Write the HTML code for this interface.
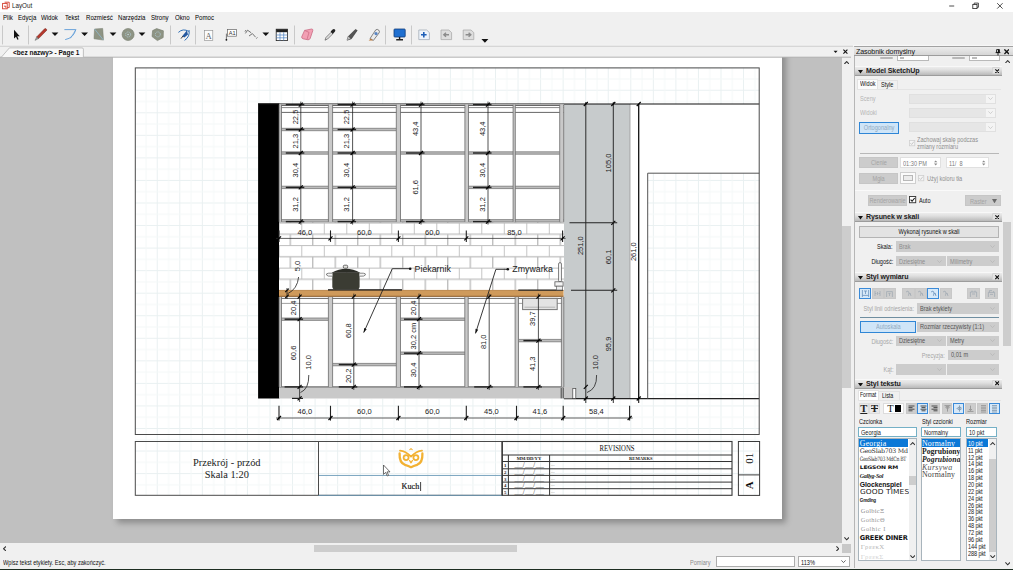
<!DOCTYPE html>
<html lang="pl">
<head>
<meta charset="utf-8">
<title>LayOut</title>
<style>
*{box-sizing:border-box;margin:0;padding:0}
html,body{width:1013px;height:570px;overflow:hidden;background:#f0f0f0}
body{position:relative;font-family:"Liberation Sans",sans-serif;font-size:7px;color:#000;line-height:1}
.a{position:absolute}
.t{position:absolute;white-space:nowrap;line-height:1}
#titlebar{left:0;top:0;width:1013px;height:12px;background:#fff}
#menubar{left:0;top:12px;width:1013px;height:12px;background:#f0f0f0}
#toolbar{left:0;top:24px;width:1013px;height:22px;background:#f0f0f0}
#tabrow{left:0;top:46px;width:851px;height:11px;background:#f0f0f0}
#canvas{left:0;top:57px;width:842px;height:486px;background:#c0c0c0;overflow:hidden}
#paper{left:112.5px;top:-10px;width:669.7px;height:471.5px;background:#fff;box-shadow:4px 4px 6px 0 rgba(0,0,0,.27)}
#vscroll{left:842px;top:57px;width:9px;height:486px;background:#f0f0f0}
#hscroll{left:0;top:543px;width:842px;height:10px;background:#f0f0f0}
#status{left:0;top:553px;width:853px;height:15px;background:#f0f0f0}
#bottomedge{left:0;top:568.7px;width:1013px;height:1.3px;background:#1c2c20}
#panel{left:853px;top:46px;width:160px;height:522px;background:#f0f0f0}
.sx{transform:scaleX(.8);transform-origin:0 50%}
.sxr{transform:scaleX(.8);transform-origin:100% 50%}
.sc{display:inline-block;transform:scaleX(.8)}
.menu span{position:absolute;top:1.9px;font-size:7px;transform:scaleX(.87);transform-origin:0 50%}
</style>
</head>
<body>
<!-- TITLE BAR -->
<div id="titlebar" class="a">
  <div class="t" style="left:12px;top:2.6px;font-size:6.8px;color:#222;transform:scaleX(.92);transform-origin:0 50%">LayOut</div>
</div>
<!-- MENU BAR -->
<div id="menubar" class="a menu">
  <span style="left:3px">Plik</span><span style="left:18px">Edycja</span><span style="left:41px">Widok</span><span style="left:65px">Tekst</span><span style="left:85.5px">Rozmieść</span><span style="left:117.5px">Narzędzia</span><span style="left:150.5px">Strony</span><span style="left:174.5px">Okno</span><span style="left:195px">Pomoc</span>
</div>
<!-- TOOLBAR -->
<div id="toolbar" class="a"></div>
<!-- TAB ROW -->
<div id="tabrow" class="a"></div>
<!-- CANVAS -->
<div id="canvas" class="a">
  <div id="paper" class="a"></div>
<!--DRAWING_START-->
<svg class="a" style="left:0;top:0" width="842" height="486" viewBox="0 57 842 486" font-family="'Liberation Sans',sans-serif">
<defs>
<pattern id="grid" x="134.2" y="67.2" width="22.55" height="22.55" patternUnits="userSpaceOnUse"><path d="M0 .5H22.55M.5 0V22.55" stroke="#e9f0f1" stroke-width="1" fill="none"/><path d="M0 11.8H22.55M11.8 0V22.55" stroke="#f4f8f8" stroke-width="1" fill="none"/></pattern>
<pattern id="tiles" x="278.8" y="222.6" width="22.5" height="22.52" patternUnits="userSpaceOnUse"><rect width="22.5" height="22.52" fill="#fff"/><path d="M0 .4H22.5M0 11.66H22.5M.2 0V11.26M11.45 11.26V22.52" stroke="#bdbdbd" stroke-width="1.35" fill="none"/></pattern>
</defs>
<rect x="135.3" y="67.9" width="624.3" height="427.4" fill="url(#grid)" />
<rect x="258.0" y="104.0" width="389.4" height="294.6" fill="#fff" />
<rect x="647.0" y="104.0" width="112.2" height="69.2" fill="#fff" />
<rect x="258.1" y="103.4" width="21.3" height="295.1" fill="#000" />
<rect x="564.0" y="104.0" width="66.0" height="294.5" fill="#c7cbcc" />
<line x1="630.0" y1="104.0" x2="630.0" y2="398.5" stroke="#999" stroke-width="0.8" />
<line x1="258.0" y1="104.0" x2="759.2" y2="104.0" stroke="#111" stroke-width="1.2" />
<line x1="564.0" y1="398.6" x2="759.2" y2="398.6" stroke="#222" stroke-width="1.1" />
<line x1="638.7" y1="104.0" x2="638.7" y2="398.6" stroke="#111" stroke-width="1.3" />
<line x1="647.7" y1="173.2" x2="759.2" y2="173.2" stroke="#555" stroke-width="1" />
<line x1="647.7" y1="173.2" x2="647.7" y2="398.6" stroke="#555" stroke-width="1" />
<rect x="279.0" y="222.3" width="285.0" height="68.2" fill="url(#tiles)" />
<rect x="279.0" y="104.6" width="285.0" height="117.2" fill="#fff" />
<line x1="279.0" y1="105.4" x2="564.0" y2="105.4" stroke="#555" stroke-width="1" />
<line x1="279.0" y1="107.6" x2="564.0" y2="107.6" stroke="#888" stroke-width="1" />
<line x1="279.0" y1="112.4" x2="564.0" y2="112.4" stroke="#666" stroke-width="1" />
<rect x="281.0" y="128.3" width="47.4" height="2.4" fill="#bdbdbd" />
<line x1="281.0" y1="128.3" x2="328.4" y2="128.3" stroke="#6a6a6a" stroke-width="0.7" />
<line x1="281.0" y1="130.7" x2="328.4" y2="130.7" stroke="#6a6a6a" stroke-width="0.7" />
<rect x="332.6" y="128.3" width="63.7" height="2.4" fill="#bdbdbd" />
<line x1="332.6" y1="128.3" x2="396.3" y2="128.3" stroke="#6a6a6a" stroke-width="0.7" />
<line x1="332.6" y1="130.7" x2="396.3" y2="130.7" stroke="#6a6a6a" stroke-width="0.7" />
<rect x="281.0" y="151.8" width="47.4" height="2.4" fill="#bdbdbd" />
<line x1="281.0" y1="151.8" x2="328.4" y2="151.8" stroke="#6a6a6a" stroke-width="0.7" />
<line x1="281.0" y1="154.2" x2="328.4" y2="154.2" stroke="#6a6a6a" stroke-width="0.7" />
<rect x="332.6" y="151.8" width="63.7" height="2.4" fill="#bdbdbd" />
<line x1="332.6" y1="151.8" x2="396.3" y2="151.8" stroke="#6a6a6a" stroke-width="0.7" />
<line x1="332.6" y1="154.2" x2="396.3" y2="154.2" stroke="#6a6a6a" stroke-width="0.7" />
<rect x="281.0" y="186.2" width="47.4" height="2.4" fill="#bdbdbd" />
<line x1="281.0" y1="186.2" x2="328.4" y2="186.2" stroke="#6a6a6a" stroke-width="0.7" />
<line x1="281.0" y1="188.6" x2="328.4" y2="188.6" stroke="#6a6a6a" stroke-width="0.7" />
<rect x="332.6" y="186.2" width="63.7" height="2.4" fill="#bdbdbd" />
<line x1="332.6" y1="186.2" x2="396.3" y2="186.2" stroke="#6a6a6a" stroke-width="0.7" />
<line x1="332.6" y1="188.6" x2="396.3" y2="188.6" stroke="#6a6a6a" stroke-width="0.7" />
<rect x="400.5" y="151.8" width="64.5" height="2.4" fill="#bdbdbd" />
<line x1="400.5" y1="151.8" x2="465.0" y2="151.8" stroke="#6a6a6a" stroke-width="0.7" />
<line x1="400.5" y1="154.2" x2="465.0" y2="154.2" stroke="#6a6a6a" stroke-width="0.7" />
<rect x="468.4" y="151.8" width="91.3" height="2.4" fill="#bdbdbd" />
<line x1="468.4" y1="151.8" x2="559.7" y2="151.8" stroke="#6a6a6a" stroke-width="0.7" />
<line x1="468.4" y1="154.2" x2="559.7" y2="154.2" stroke="#6a6a6a" stroke-width="0.7" />
<rect x="468.4" y="186.2" width="91.3" height="2.4" fill="#bdbdbd" />
<line x1="468.4" y1="186.2" x2="559.7" y2="186.2" stroke="#6a6a6a" stroke-width="0.7" />
<line x1="468.4" y1="188.6" x2="559.7" y2="188.6" stroke="#6a6a6a" stroke-width="0.7" />
<rect x="279.0" y="219.6" width="285.0" height="2.4" fill="#bdbdbd" />
<line x1="279.0" y1="219.6" x2="564.0" y2="219.6" stroke="#6a6a6a" stroke-width="0.7" />
<line x1="279.0" y1="222.0" x2="564.0" y2="222.0" stroke="#6a6a6a" stroke-width="0.7" />
<rect x="279.1" y="104.6" width="2.4" height="117.2" fill="#c9c9c9" />
<line x1="279.1" y1="104.6" x2="279.1" y2="221.8" stroke="#6a6a6a" stroke-width="0.8" />
<line x1="281.5" y1="104.6" x2="281.5" y2="221.8" stroke="#6a6a6a" stroke-width="0.8" />
<rect x="328.4" y="104.6" width="4.2" height="117.2" fill="#c9c9c9" />
<line x1="328.4" y1="104.6" x2="328.4" y2="221.8" stroke="#6a6a6a" stroke-width="0.8" />
<line x1="332.6" y1="104.6" x2="332.6" y2="221.8" stroke="#6a6a6a" stroke-width="0.8" />
<rect x="396.3" y="104.6" width="4.2" height="117.2" fill="#c9c9c9" />
<line x1="396.3" y1="104.6" x2="396.3" y2="221.8" stroke="#6a6a6a" stroke-width="0.8" />
<line x1="400.5" y1="104.6" x2="400.5" y2="221.8" stroke="#6a6a6a" stroke-width="0.8" />
<rect x="464.9" y="104.6" width="3.6" height="117.2" fill="#c9c9c9" />
<line x1="464.9" y1="104.6" x2="464.9" y2="221.8" stroke="#6a6a6a" stroke-width="0.8" />
<line x1="468.5" y1="104.6" x2="468.5" y2="221.8" stroke="#6a6a6a" stroke-width="0.8" />
<rect x="513.1" y="104.6" width="2.2" height="117.2" fill="#c9c9c9" />
<line x1="513.1" y1="104.6" x2="513.1" y2="221.8" stroke="#6a6a6a" stroke-width="0.8" />
<line x1="515.3" y1="104.6" x2="515.3" y2="221.8" stroke="#6a6a6a" stroke-width="0.8" />
<rect x="559.7" y="104.6" width="4.0" height="117.2" fill="#c9c9c9" />
<line x1="559.7" y1="104.6" x2="559.7" y2="221.8" stroke="#6a6a6a" stroke-width="0.8" />
<line x1="563.7" y1="104.6" x2="563.7" y2="221.8" stroke="#6a6a6a" stroke-width="0.8" />
<rect x="279.0" y="290.2" width="284.6" height="6.2" fill="#cf9a5b" />
<line x1="279.0" y1="290.4" x2="563.6" y2="290.4" stroke="#b98448" stroke-width="0.8" />
<line x1="279.0" y1="296.3" x2="563.6" y2="296.3" stroke="#8a5a2a" stroke-width="1" />
<line x1="328.0" y1="289.9" x2="402.0" y2="289.9" stroke="#111" stroke-width="1.2" />
<line x1="518.3" y1="290.1" x2="563.0" y2="290.1" stroke="#222" stroke-width="1.1" />
<rect x="279.0" y="297.0" width="285.0" height="89.9" fill="#fff" />
<line x1="279.0" y1="298.4" x2="564.0" y2="298.4" stroke="#666" stroke-width="1" />
<line x1="279.0" y1="303.4" x2="564.0" y2="303.4" stroke="#888" stroke-width="0.8" />
<rect x="279.0" y="386.9" width="285.0" height="11.6" fill="#c9c9c9" />
<line x1="279.0" y1="386.9" x2="564.0" y2="386.9" stroke="#555" stroke-width="1" />
<rect x="281.0" y="318.0" width="47.4" height="2.4" fill="#bdbdbd" />
<line x1="281.0" y1="318.0" x2="328.4" y2="318.0" stroke="#6a6a6a" stroke-width="0.7" />
<line x1="281.0" y1="320.4" x2="328.4" y2="320.4" stroke="#6a6a6a" stroke-width="0.7" />
<rect x="332.6" y="363.4" width="63.7" height="2.4" fill="#bdbdbd" />
<line x1="332.6" y1="363.4" x2="396.3" y2="363.4" stroke="#6a6a6a" stroke-width="0.7" />
<line x1="332.6" y1="365.8" x2="396.3" y2="365.8" stroke="#6a6a6a" stroke-width="0.7" />
<rect x="400.5" y="318.0" width="64.5" height="2.4" fill="#bdbdbd" />
<line x1="400.5" y1="318.0" x2="465.0" y2="318.0" stroke="#6a6a6a" stroke-width="0.7" />
<line x1="400.5" y1="320.4" x2="465.0" y2="320.4" stroke="#6a6a6a" stroke-width="0.7" />
<rect x="400.5" y="352.0" width="64.5" height="2.4" fill="#bdbdbd" />
<line x1="400.5" y1="352.0" x2="465.0" y2="352.0" stroke="#6a6a6a" stroke-width="0.7" />
<line x1="400.5" y1="354.4" x2="465.0" y2="354.4" stroke="#6a6a6a" stroke-width="0.7" />
<rect x="518.8" y="339.4" width="43.2" height="2.4" fill="#bdbdbd" />
<line x1="518.8" y1="339.4" x2="562.0" y2="339.4" stroke="#6a6a6a" stroke-width="0.7" />
<line x1="518.8" y1="341.8" x2="562.0" y2="341.8" stroke="#6a6a6a" stroke-width="0.7" />
<rect x="279.1" y="297.0" width="2.4" height="89.9" fill="#c9c9c9" />
<line x1="279.1" y1="297.0" x2="279.1" y2="386.9" stroke="#6a6a6a" stroke-width="0.8" />
<line x1="281.5" y1="297.0" x2="281.5" y2="386.9" stroke="#6a6a6a" stroke-width="0.8" />
<rect x="328.4" y="297.0" width="4.2" height="89.9" fill="#c9c9c9" />
<line x1="328.4" y1="297.0" x2="328.4" y2="386.9" stroke="#6a6a6a" stroke-width="0.8" />
<line x1="332.6" y1="297.0" x2="332.6" y2="386.9" stroke="#6a6a6a" stroke-width="0.8" />
<rect x="396.3" y="297.0" width="4.2" height="89.9" fill="#c9c9c9" />
<line x1="396.3" y1="297.0" x2="396.3" y2="386.9" stroke="#6a6a6a" stroke-width="0.8" />
<line x1="400.5" y1="297.0" x2="400.5" y2="386.9" stroke="#6a6a6a" stroke-width="0.8" />
<rect x="464.8" y="297.0" width="3.4" height="89.9" fill="#c9c9c9" />
<line x1="464.8" y1="297.0" x2="464.8" y2="386.9" stroke="#6a6a6a" stroke-width="0.8" />
<line x1="468.2" y1="297.0" x2="468.2" y2="386.9" stroke="#6a6a6a" stroke-width="0.8" />
<rect x="515.1" y="297.0" width="3.4" height="89.9" fill="#c9c9c9" />
<line x1="515.1" y1="297.0" x2="515.1" y2="386.9" stroke="#6a6a6a" stroke-width="0.8" />
<line x1="518.5" y1="297.0" x2="518.5" y2="386.9" stroke="#6a6a6a" stroke-width="0.8" />
<rect x="561.4" y="297.0" width="2.4" height="89.9" fill="#c9c9c9" />
<line x1="561.4" y1="297.0" x2="561.4" y2="386.9" stroke="#6a6a6a" stroke-width="0.8" />
<line x1="563.8" y1="297.0" x2="563.8" y2="386.9" stroke="#6a6a6a" stroke-width="0.8" />
<rect x="522.6" y="298.4" width="34.6" height="11.2" fill="#e3e3e3" stroke="#777" stroke-width="1" />
<line x1="524.5" y1="307.2" x2="555.2" y2="307.2" stroke="#aaa" stroke-width="0.8" />
<line x1="561.2" y1="388.0" x2="561.2" y2="398.4" stroke="#444" stroke-width="1" />
<line x1="563.2" y1="388.0" x2="563.2" y2="398.4" stroke="#444" stroke-width="1" />
<rect x="564.0" y="387.0" width="8.4" height="11.4" fill="#c9c9c9" />
<rect x="572.8" y="388.4" width="3.0" height="10.0" fill="#fff" stroke="#444" stroke-width="0.7" />
<g><path d="M332.3 272.6 H359.6 V286.5 Q359.6 289.6 356.5 289.6 H335.4 Q332.3 289.6 332.3 286.5 Z" fill="#3b3c33"/><path d="M331.6 272.8 Q346 264.5 360.3 272.8 Z" fill="#2c2d27"/><rect x="343.3" y="265.2" width="4.4" height="3" rx="1.2" fill="#e4e4e0" stroke="#333" stroke-width=".7"/><path d="M332.3 273.2 H328.6 Q326 273.3 326.5 275 Q327.2 276.6 332.3 276.2 M359.6 273.2 H363.3 Q365.9 273.3 365.4 275 Q364.7 276.6 359.6 276.2" fill="#f4f4f4" stroke="#555" stroke-width=".7"/></g>
<rect x="558.6" y="262.6" width="2.8" height="19.4" fill="#fff" stroke="#555" stroke-width="0.8" rx="1.4"/>
<rect x="554.9" y="281.8" width="8.2" height="4.4" fill="#f4f4f4" stroke="#555" stroke-width="0.8" />
<rect x="556.4" y="286.2" width="6.0" height="3.8" fill="#eee" stroke="#666" stroke-width="0.7" />
<rect x="135.3" y="67.9" width="623.9" height="366.6" fill="none" stroke="#4a4a4a" stroke-width="1" />
<line x1="300.8" y1="101.6" x2="300.8" y2="224.6" stroke="#1a1a1a" stroke-width="0.75" />
<line x1="285.8" y1="104.6" x2="304.3" y2="104.6" stroke="#222" stroke-width="1.4" />
<line x1="298.8" y1="106.6" x2="302.8" y2="102.6" stroke="#000" stroke-width="1.15"/>
<line x1="285.8" y1="129.5" x2="304.3" y2="129.5" stroke="#222" stroke-width="1.4" />
<line x1="298.8" y1="131.5" x2="302.8" y2="127.5" stroke="#000" stroke-width="1.15"/>
<line x1="285.8" y1="153.0" x2="304.3" y2="153.0" stroke="#222" stroke-width="1.4" />
<line x1="298.8" y1="155.0" x2="302.8" y2="151.0" stroke="#000" stroke-width="1.15"/>
<line x1="285.8" y1="187.4" x2="304.3" y2="187.4" stroke="#222" stroke-width="1.4" />
<line x1="298.8" y1="189.4" x2="302.8" y2="185.4" stroke="#000" stroke-width="1.15"/>
<line x1="285.8" y1="221.6" x2="304.3" y2="221.6" stroke="#222" stroke-width="1.4" />
<line x1="298.8" y1="223.6" x2="302.8" y2="219.6" stroke="#000" stroke-width="1.15"/>
<text transform="translate(297.6 117.0) rotate(-90)" text-anchor="middle" font-size="7.5" fill="#222">22,5</text>
<text transform="translate(297.6 141.2) rotate(-90)" text-anchor="middle" font-size="7.5" fill="#222">21,3</text>
<text transform="translate(297.6 170.2) rotate(-90)" text-anchor="middle" font-size="7.5" fill="#222">30,4</text>
<text transform="translate(297.6 204.5) rotate(-90)" text-anchor="middle" font-size="7.5" fill="#222">31,2</text>
<line x1="352.6" y1="101.6" x2="352.6" y2="224.6" stroke="#1a1a1a" stroke-width="0.75" />
<line x1="337.6" y1="104.6" x2="356.1" y2="104.6" stroke="#222" stroke-width="1.4" />
<line x1="350.6" y1="106.6" x2="354.6" y2="102.6" stroke="#000" stroke-width="1.15"/>
<line x1="337.6" y1="129.5" x2="356.1" y2="129.5" stroke="#222" stroke-width="1.4" />
<line x1="350.6" y1="131.5" x2="354.6" y2="127.5" stroke="#000" stroke-width="1.15"/>
<line x1="337.6" y1="153.0" x2="356.1" y2="153.0" stroke="#222" stroke-width="1.4" />
<line x1="350.6" y1="155.0" x2="354.6" y2="151.0" stroke="#000" stroke-width="1.15"/>
<line x1="337.6" y1="187.4" x2="356.1" y2="187.4" stroke="#222" stroke-width="1.4" />
<line x1="350.6" y1="189.4" x2="354.6" y2="185.4" stroke="#000" stroke-width="1.15"/>
<line x1="337.6" y1="221.6" x2="356.1" y2="221.6" stroke="#222" stroke-width="1.4" />
<line x1="350.6" y1="223.6" x2="354.6" y2="219.6" stroke="#000" stroke-width="1.15"/>
<text transform="translate(349.4 117.0) rotate(-90)" text-anchor="middle" font-size="7.5" fill="#222">22,5</text>
<text transform="translate(349.4 141.2) rotate(-90)" text-anchor="middle" font-size="7.5" fill="#222">21,3</text>
<text transform="translate(349.4 170.2) rotate(-90)" text-anchor="middle" font-size="7.5" fill="#222">30,4</text>
<text transform="translate(349.4 204.5) rotate(-90)" text-anchor="middle" font-size="7.5" fill="#222">31,2</text>
<line x1="421.0" y1="101.6" x2="421.0" y2="224.6" stroke="#1a1a1a" stroke-width="0.75" />
<line x1="406.0" y1="104.6" x2="424.5" y2="104.6" stroke="#222" stroke-width="1.4" />
<line x1="419.0" y1="106.6" x2="423.0" y2="102.6" stroke="#000" stroke-width="1.15"/>
<line x1="406.0" y1="153.0" x2="424.5" y2="153.0" stroke="#222" stroke-width="1.4" />
<line x1="419.0" y1="155.0" x2="423.0" y2="151.0" stroke="#000" stroke-width="1.15"/>
<line x1="406.0" y1="221.6" x2="424.5" y2="221.6" stroke="#222" stroke-width="1.4" />
<line x1="419.0" y1="223.6" x2="423.0" y2="219.6" stroke="#000" stroke-width="1.15"/>
<text transform="translate(417.8 128.8) rotate(-90)" text-anchor="middle" font-size="7.5" fill="#222">43,4</text>
<text transform="translate(417.8 187.3) rotate(-90)" text-anchor="middle" font-size="7.5" fill="#222">61,6</text>
<line x1="488.0" y1="101.6" x2="488.0" y2="224.6" stroke="#1a1a1a" stroke-width="0.75" />
<line x1="473.0" y1="104.6" x2="491.5" y2="104.6" stroke="#222" stroke-width="1.4" />
<line x1="486.0" y1="106.6" x2="490.0" y2="102.6" stroke="#000" stroke-width="1.15"/>
<line x1="473.0" y1="153.0" x2="491.5" y2="153.0" stroke="#222" stroke-width="1.4" />
<line x1="486.0" y1="155.0" x2="490.0" y2="151.0" stroke="#000" stroke-width="1.15"/>
<line x1="473.0" y1="187.4" x2="491.5" y2="187.4" stroke="#222" stroke-width="1.4" />
<line x1="486.0" y1="189.4" x2="490.0" y2="185.4" stroke="#000" stroke-width="1.15"/>
<line x1="473.0" y1="221.6" x2="491.5" y2="221.6" stroke="#222" stroke-width="1.4" />
<line x1="486.0" y1="223.6" x2="490.0" y2="219.6" stroke="#000" stroke-width="1.15"/>
<text transform="translate(484.8 128.8) rotate(-90)" text-anchor="middle" font-size="7.5" fill="#222">43,4</text>
<text transform="translate(484.8 170.2) rotate(-90)" text-anchor="middle" font-size="7.5" fill="#222">30,4</text>
<text transform="translate(484.8 204.5) rotate(-90)" text-anchor="middle" font-size="7.5" fill="#222">31,2</text>
<line x1="276.0" y1="238.4" x2="565.6" y2="238.4" stroke="#2a2a2a" stroke-width="0.75" />
<line x1="279.0" y1="230.4" x2="279.0" y2="241.9" stroke="#222" stroke-width="1.1" />
<line x1="277.0" y1="240.4" x2="281.0" y2="236.4" stroke="#000" stroke-width="1.15"/>
<line x1="330.5" y1="230.4" x2="330.5" y2="241.9" stroke="#222" stroke-width="1.1" />
<line x1="328.5" y1="240.4" x2="332.5" y2="236.4" stroke="#000" stroke-width="1.15"/>
<line x1="398.4" y1="230.4" x2="398.4" y2="241.9" stroke="#222" stroke-width="1.1" />
<line x1="396.4" y1="240.4" x2="400.4" y2="236.4" stroke="#000" stroke-width="1.15"/>
<line x1="466.3" y1="230.4" x2="466.3" y2="241.9" stroke="#222" stroke-width="1.1" />
<line x1="464.3" y1="240.4" x2="468.3" y2="236.4" stroke="#000" stroke-width="1.15"/>
<line x1="562.6" y1="230.4" x2="562.6" y2="241.9" stroke="#222" stroke-width="1.1" />
<line x1="560.6" y1="240.4" x2="564.6" y2="236.4" stroke="#000" stroke-width="1.15"/>
<text x="304.8" y="235.2" text-anchor="middle" font-size="7.5" fill="#222">46,0</text>
<text x="364.4" y="235.2" text-anchor="middle" font-size="7.5" fill="#222">60,0</text>
<text x="432.4" y="235.2" text-anchor="middle" font-size="7.5" fill="#222">60,0</text>
<text x="514.5" y="235.2" text-anchor="middle" font-size="7.5" fill="#222">85,0</text>
<line x1="299.6" y1="293.6" x2="299.6" y2="402.0" stroke="#1a1a1a" stroke-width="0.75" />
<line x1="297.6" y1="298.6" x2="301.6" y2="294.6" stroke="#000" stroke-width="1.15"/>
<line x1="284.6" y1="319.2" x2="303.1" y2="319.2" stroke="#222" stroke-width="1.4" />
<line x1="297.6" y1="321.2" x2="301.6" y2="317.2" stroke="#000" stroke-width="1.15"/>
<line x1="284.6" y1="386.9" x2="303.1" y2="386.9" stroke="#222" stroke-width="1.4" />
<line x1="297.6" y1="388.9" x2="301.6" y2="384.9" stroke="#000" stroke-width="1.15"/>
<text transform="translate(296.4 307.9) rotate(-90)" text-anchor="middle" font-size="7.5" fill="#222">20,4</text>
<text transform="translate(296.4 353.0) rotate(-90)" text-anchor="middle" font-size="7.5" fill="#222">60,6</text>
<line x1="297.6" y1="400.4" x2="301.6" y2="396.4" stroke="#000" stroke-width="1.15"/>
<line x1="292.0" y1="398.4" x2="303.0" y2="398.4" stroke="#222" stroke-width="1.2" />
<line x1="353.8" y1="293.6" x2="353.8" y2="389.9" stroke="#1a1a1a" stroke-width="0.75" />
<line x1="351.8" y1="298.6" x2="355.8" y2="294.6" stroke="#000" stroke-width="1.15"/>
<line x1="338.8" y1="364.6" x2="357.3" y2="364.6" stroke="#222" stroke-width="1.4" />
<line x1="351.8" y1="366.6" x2="355.8" y2="362.6" stroke="#000" stroke-width="1.15"/>
<line x1="338.8" y1="386.9" x2="357.3" y2="386.9" stroke="#222" stroke-width="1.4" />
<line x1="351.8" y1="388.9" x2="355.8" y2="384.9" stroke="#000" stroke-width="1.15"/>
<text transform="translate(350.6 330.6) rotate(-90)" text-anchor="middle" font-size="7.5" fill="#222">60,8</text>
<text transform="translate(350.6 375.8) rotate(-90)" text-anchor="middle" font-size="7.5" fill="#222">20,2</text>
<line x1="419.0" y1="293.6" x2="419.0" y2="389.9" stroke="#1a1a1a" stroke-width="0.75" />
<line x1="417.0" y1="298.6" x2="421.0" y2="294.6" stroke="#000" stroke-width="1.15"/>
<line x1="404.0" y1="319.2" x2="422.5" y2="319.2" stroke="#222" stroke-width="1.4" />
<line x1="417.0" y1="321.2" x2="421.0" y2="317.2" stroke="#000" stroke-width="1.15"/>
<line x1="404.0" y1="353.2" x2="422.5" y2="353.2" stroke="#222" stroke-width="1.4" />
<line x1="417.0" y1="355.2" x2="421.0" y2="351.2" stroke="#000" stroke-width="1.15"/>
<line x1="404.0" y1="386.9" x2="422.5" y2="386.9" stroke="#222" stroke-width="1.4" />
<line x1="417.0" y1="388.9" x2="421.0" y2="384.9" stroke="#000" stroke-width="1.15"/>
<text transform="translate(415.8 307.9) rotate(-90)" text-anchor="middle" font-size="7.5" fill="#222">20,4</text>
<text transform="translate(415.8 336.2) rotate(-90)" text-anchor="middle" font-size="7.5" fill="#222">30,2 cm</text>
<text transform="translate(415.8 370.0) rotate(-90)" text-anchor="middle" font-size="7.5" fill="#222">30,4</text>
<line x1="489.2" y1="293.6" x2="489.2" y2="389.9" stroke="#1a1a1a" stroke-width="0.75" />
<line x1="487.2" y1="298.6" x2="491.2" y2="294.6" stroke="#000" stroke-width="1.15"/>
<line x1="474.2" y1="386.9" x2="492.7" y2="386.9" stroke="#222" stroke-width="1.4" />
<line x1="487.2" y1="388.9" x2="491.2" y2="384.9" stroke="#000" stroke-width="1.15"/>
<text transform="translate(486.0 341.8) rotate(-90)" text-anchor="middle" font-size="7.5" fill="#222">81,0</text>
<line x1="538.4" y1="293.6" x2="538.4" y2="389.9" stroke="#1a1a1a" stroke-width="0.75" />
<line x1="536.4" y1="298.6" x2="540.4" y2="294.6" stroke="#000" stroke-width="1.15"/>
<line x1="523.4" y1="340.6" x2="541.9" y2="340.6" stroke="#222" stroke-width="1.4" />
<line x1="536.4" y1="342.6" x2="540.4" y2="338.6" stroke="#000" stroke-width="1.15"/>
<line x1="523.4" y1="386.9" x2="541.9" y2="386.9" stroke="#222" stroke-width="1.4" />
<line x1="536.4" y1="388.9" x2="540.4" y2="384.9" stroke="#000" stroke-width="1.15"/>
<text transform="translate(535.2 318.6) rotate(-90)" text-anchor="middle" font-size="7.5" fill="#222">39,7</text>
<text transform="translate(535.2 363.8) rotate(-90)" text-anchor="middle" font-size="7.5" fill="#222">41,3</text>
<text transform="translate(300.2 266.0) rotate(-90)" text-anchor="middle" font-size="7.5" fill="#222">5,0</text>
<path d="M298.6 277 Q297.5 289 287.5 293.8" fill="none" stroke="#222" stroke-width=".8"/>
<line x1="285.2" y1="292.2" x2="288.8" y2="288.6" stroke="#000" stroke-width="1.15"/>
<line x1="285.2" y1="298.2" x2="288.8" y2="294.6" stroke="#000" stroke-width="1.15"/>
<line x1="287.0" y1="288.0" x2="287.0" y2="299.0" stroke="#1a1a1a" stroke-width="0.8" />
<text transform="translate(311.0 362.4) rotate(-90)" text-anchor="middle" font-size="7.5" fill="#222">10,0</text>
<path d="M308.8 375 Q309 389 300.5 392.5" fill="none" stroke="#222" stroke-width=".8"/>
<text transform="translate(598.4 362.4) rotate(-90)" text-anchor="middle" font-size="7.5" fill="#222">10,0</text>
<path d="M596.6 375 Q597 389 587 392.5" fill="none" stroke="#222" stroke-width=".8"/>
<line x1="585.8" y1="102.0" x2="585.8" y2="403.0" stroke="#1a1a1a" stroke-width="0.9" />
<line x1="583.8" y1="106.0" x2="587.8" y2="102.0" stroke="#000" stroke-width="1.15"/>
<line x1="583.8" y1="388.9" x2="587.8" y2="384.9" stroke="#000" stroke-width="1.15"/>
<line x1="583.8" y1="400.5" x2="587.8" y2="396.5" stroke="#000" stroke-width="1.15"/>
<text transform="translate(583.3 245.7) rotate(-90)" text-anchor="middle" font-size="7.5" fill="#222">251,0</text>
<line x1="613.3" y1="102.0" x2="613.3" y2="403.0" stroke="#1a1a1a" stroke-width="0.9" />
<line x1="611.3" y1="106.0" x2="615.3" y2="102.0" stroke="#000" stroke-width="1.15"/>
<line x1="611.3" y1="224.8" x2="615.3" y2="220.8" stroke="#000" stroke-width="1.15"/>
<line x1="611.3" y1="292.3" x2="615.3" y2="288.3" stroke="#000" stroke-width="1.15"/>
<line x1="611.3" y1="400.5" x2="615.3" y2="396.5" stroke="#000" stroke-width="1.15"/>
<line x1="569.5" y1="222.8" x2="617.2" y2="222.8" stroke="#222" stroke-width="1.1" />
<line x1="571.0" y1="290.3" x2="617.2" y2="290.3" stroke="#222" stroke-width="1.1" />
<text transform="translate(610.8 163.0) rotate(-90)" text-anchor="middle" font-size="7.5" fill="#222">105,0</text>
<text transform="translate(610.8 257.0) rotate(-90)" text-anchor="middle" font-size="7.5" fill="#222">60,1</text>
<text transform="translate(610.8 344.0) rotate(-90)" text-anchor="middle" font-size="7.5" fill="#222">95,9</text>
<line x1="638.7" y1="398.0" x2="638.7" y2="403.0" stroke="#1a1a1a" stroke-width="1.1" />
<line x1="636.7" y1="106.0" x2="640.7" y2="102.0" stroke="#000" stroke-width="1.15"/>
<line x1="636.7" y1="400.5" x2="640.7" y2="396.5" stroke="#000" stroke-width="1.15"/>
<text transform="translate(636.2 251.7) rotate(-90)" text-anchor="middle" font-size="7.5" fill="#222">261,0</text>
<line x1="276.0" y1="418.0" x2="632.6" y2="418.0" stroke="#2a2a2a" stroke-width="0.75" />
<line x1="279.0" y1="405.8" x2="279.0" y2="420.6" stroke="#222" stroke-width="1.1" />
<line x1="277.0" y1="420.0" x2="281.0" y2="416.0" stroke="#000" stroke-width="1.15"/>
<line x1="330.5" y1="405.8" x2="330.5" y2="420.6" stroke="#222" stroke-width="1.1" />
<line x1="328.5" y1="420.0" x2="332.5" y2="416.0" stroke="#000" stroke-width="1.15"/>
<line x1="398.4" y1="405.8" x2="398.4" y2="420.6" stroke="#222" stroke-width="1.1" />
<line x1="396.4" y1="420.0" x2="400.4" y2="416.0" stroke="#000" stroke-width="1.15"/>
<line x1="466.3" y1="405.8" x2="466.3" y2="420.6" stroke="#222" stroke-width="1.1" />
<line x1="464.3" y1="420.0" x2="468.3" y2="416.0" stroke="#000" stroke-width="1.15"/>
<line x1="516.5" y1="405.8" x2="516.5" y2="420.6" stroke="#222" stroke-width="1.1" />
<line x1="514.5" y1="420.0" x2="518.5" y2="416.0" stroke="#000" stroke-width="1.15"/>
<line x1="563.2" y1="405.8" x2="563.2" y2="420.6" stroke="#222" stroke-width="1.1" />
<line x1="561.2" y1="420.0" x2="565.2" y2="416.0" stroke="#000" stroke-width="1.15"/>
<line x1="629.6" y1="405.8" x2="629.6" y2="420.6" stroke="#222" stroke-width="1.1" />
<line x1="627.6" y1="420.0" x2="631.6" y2="416.0" stroke="#000" stroke-width="1.15"/>
<text x="304.8" y="414.4" text-anchor="middle" font-size="7.5" fill="#222">46,0</text>
<text x="364.4" y="414.4" text-anchor="middle" font-size="7.5" fill="#222">60,0</text>
<text x="432.4" y="414.4" text-anchor="middle" font-size="7.5" fill="#222">60,0</text>
<text x="491.4" y="414.4" text-anchor="middle" font-size="7.5" fill="#222">45,0</text>
<text x="539.9" y="414.4" text-anchor="middle" font-size="7.5" fill="#222">41,6</text>
<text x="596.4" y="414.4" text-anchor="middle" font-size="7.5" fill="#222">58,4</text>
<path d="M363.7 332.6 L392.3 268.7 H410.2" fill="none" stroke="#222" stroke-width=".9"/>
<path d="M363.7 332.6 l0.4 -4.6 l2.6 1.2 z" fill="#111"/>
<circle cx="410.2" cy="268.7" r="1.3" fill="#111"/>
<text x="414.6" y="271.6" text-anchor="start" font-size="8.8" fill="#222">Piekarnik</text>
<path d="M475.5 333.4 L495.9 269.3 H507.8" fill="none" stroke="#222" stroke-width=".9"/>
<path d="M475.5 333.4 l0 -4.6 l2.7 0.9 z" fill="#111"/>
<circle cx="507.8" cy="269.3" r="1.3" fill="#111"/>
<text x="512.3" y="272.2" text-anchor="start" font-size="8.8" fill="#222">Zmywarka</text>
<rect x="135.3" y="441.5" width="183.2" height="53.8" fill="none" stroke="#4a4a4a" stroke-width="1" />
<rect x="318.5" y="441.5" width="183.7" height="53.8" fill="none" stroke="#4a4a4a" stroke-width="1" />
<text x="226.8" y="466.3" text-anchor="middle" font-family="'Liberation Serif',serif" font-size="10.4" fill="#222">Przekrój - przód</text>
<text x="226.8" y="477.6" text-anchor="middle" font-family="'Liberation Serif',serif" font-size="10.4" fill="#222">Skala 1:20</text>
<rect x="318.5" y="475.4" width="183.7" height="19.9" fill="none" stroke="#6c9bb8" stroke-width="0.9" />
<line x1="318.5" y1="441.5" x2="318.5" y2="495.3" stroke="#4a4a4a" stroke-width="1" />
<line x1="502.2" y1="441.5" x2="502.2" y2="495.3" stroke="#3a3a3a" stroke-width="1" />
<text x="401.6" y="488.9" font-family="'Liberation Serif',serif" font-size="8.2" fill="#111" stroke="#111" stroke-width=".15">Kuch</text>
<line x1="420.6" y1="482.0" x2="420.6" y2="491.0" stroke="#111" stroke-width="0.8" />
<g fill="none" stroke="#f2b133" stroke-linecap="round" stroke-linejoin="round"><path d="M399.6 453.5 Q399.2 463 405 464.8 Q408.5 465.8 411 467.2 Q413.5 465.8 417 464.8 Q422.8 463 422.4 453.5" stroke-width="2.3"/><path d="M400 450.6 Q405.5 451 411 456.6 Q416.5 451 422 450.6" stroke-width="1.9"/><circle cx="406.1" cy="457.6" r="2.5" stroke-width="1.8"/><circle cx="415.9" cy="457.6" r="2.5" stroke-width="1.8"/><path d="M409.6 460.5 L411 462.8 L412.4 460.5" stroke-width="1.3"/><path d="M409.8 449.6 L411 448.6 L412.2 449.6" stroke-width="1.1"/></g>
<path d="M383.5 465 V474.4 L385.7 472.4 L387.3 476 L388.6 475.4 L387 471.9 H390 Z" fill="#fff" stroke="#333" stroke-width=".7" stroke-linejoin="round"/>
<rect x="502.2" y="441.5" width="229.8" height="53.8" fill="none" stroke="#3a3a3a" stroke-width="1.1" />
<line x1="502.2" y1="455.0" x2="732.0" y2="455.0" stroke="#333" stroke-width="1" />
<line x1="502.2" y1="461.5" x2="732.0" y2="461.5" stroke="#333" stroke-width="1" />
<line x1="502.2" y1="468.8" x2="732.0" y2="468.8" stroke="#333" stroke-width="1" />
<line x1="502.2" y1="475.4" x2="732.0" y2="475.4" stroke="#333" stroke-width="1" />
<line x1="502.2" y1="482.1" x2="732.0" y2="482.1" stroke="#333" stroke-width="1" />
<line x1="502.2" y1="488.7" x2="732.0" y2="488.7" stroke="#333" stroke-width="1" />
<line x1="508.4" y1="455.0" x2="508.4" y2="495.3" stroke="#333" stroke-width="1" />
<line x1="549.6" y1="455.0" x2="549.6" y2="495.3" stroke="#333" stroke-width="1" />
<text x="617" y="450.5" text-anchor="middle" font-family="'Liberation Serif',serif" font-size="7.9" textLength="35" lengthAdjust="spacingAndGlyphs" fill="#111">REVISIONS</text>
<text x="529" y="459.7" text-anchor="middle" font-family="'Liberation Serif',serif" font-size="4.6" font-weight="bold" fill="#222">MM/DD/YY</text>
<text x="640.8" y="459.7" text-anchor="middle" font-family="'Liberation Serif',serif" font-size="4.6" font-weight="bold" fill="#222">REMARKS</text>
<text x="505.3" y="466.8" text-anchor="middle" font-family="'Liberation Serif',serif" font-size="4.8" font-weight="bold" fill="#222">1</text>
<text x="529.2" y="467.0" text-anchor="middle" font-family="'Liberation Serif',serif" font-size="7.4" textLength="29.4" lengthAdjust="spacingAndGlyphs" fill="#555">__/__/__</text>
<text x="551" y="466.8" font-family="'Liberation Serif',serif" font-size="3.6" fill="#777">---</text>
<text x="505.3" y="473.8" text-anchor="middle" font-family="'Liberation Serif',serif" font-size="4.8" font-weight="bold" fill="#222">2</text>
<text x="529.2" y="474.0" text-anchor="middle" font-family="'Liberation Serif',serif" font-size="7.4" textLength="29.4" lengthAdjust="spacingAndGlyphs" fill="#555">__/__/__</text>
<text x="551" y="473.8" font-family="'Liberation Serif',serif" font-size="3.6" fill="#777">---</text>
<text x="505.3" y="480.6" text-anchor="middle" font-family="'Liberation Serif',serif" font-size="4.8" font-weight="bold" fill="#222">3</text>
<text x="529.2" y="480.8" text-anchor="middle" font-family="'Liberation Serif',serif" font-size="7.4" textLength="29.4" lengthAdjust="spacingAndGlyphs" fill="#555">__/__/__</text>
<text x="551" y="480.6" font-family="'Liberation Serif',serif" font-size="3.6" fill="#777">---</text>
<text x="505.3" y="487.2" text-anchor="middle" font-family="'Liberation Serif',serif" font-size="4.8" font-weight="bold" fill="#222">4</text>
<text x="529.2" y="487.4" text-anchor="middle" font-family="'Liberation Serif',serif" font-size="7.4" textLength="29.4" lengthAdjust="spacingAndGlyphs" fill="#555">__/__/__</text>
<text x="551" y="487.2" font-family="'Liberation Serif',serif" font-size="3.6" fill="#777">---</text>
<text x="505.3" y="493.8" text-anchor="middle" font-family="'Liberation Serif',serif" font-size="4.8" font-weight="bold" fill="#222">5</text>
<text x="529.2" y="494.0" text-anchor="middle" font-family="'Liberation Serif',serif" font-size="7.4" textLength="29.4" lengthAdjust="spacingAndGlyphs" fill="#555">__/__/__</text>
<text x="551" y="493.8" font-family="'Liberation Serif',serif" font-size="3.6" fill="#777">---</text>
<rect x="738.4" y="441.5" width="21.2" height="53.9" fill="none" stroke="#3a3a3a" stroke-width="1" />
<line x1="738.4" y1="474.9" x2="759.6" y2="474.9" stroke="#3a3a3a" stroke-width="1" />
<text transform="translate(753 458.3) rotate(-90)" text-anchor="middle" font-family="'Liberation Serif',serif" font-size="11" fill="#111">01</text>
<text transform="translate(753 485.3) rotate(-90)" text-anchor="middle" font-family="'Liberation Serif',serif" font-size="11" font-weight="bold" fill="#111">A</text>
</svg>
<!--DRAWING_END-->
</div>
<!--BOTTOM_START-->
<!-- canvas scrollbars -->
<div class="a" style="left:841.6px;top:57.6px;width:9.2px;height:485.8px;background:#f0f0f0"></div>
<div class="a" style="left:842px;top:226.4px;width:8.6px;height:162px;background:#cdcdcd"></div>
<svg class="a" style="left:843.6px;top:60.8px" width="5.4" height="3.4" viewBox="0 0 5.4 3.4"><path d="M.4 3L2.7 .6L5 3" fill="none" stroke="#333" stroke-width="1.1"/></svg>
<svg class="a" style="left:843.6px;top:537.4px" width="5.4" height="3.4" viewBox="0 0 5.4 3.4"><path d="M.4 .4L2.7 2.8L5 .4" fill="none" stroke="#333" stroke-width="1.1"/></svg>
<div class="a" style="left:0;top:543.2px;width:841.6px;height:9.6px;background:#f0f0f0"></div>
<div class="a" style="left:314px;top:544.6px;width:203.4px;height:7.8px;background:#cdcdcd"></div>
<svg class="a" style="left:3px;top:545.8px" width="3.4" height="5.4" viewBox="0 0 3.4 5.4"><path d="M3 .4L.6 2.7L3 5" fill="none" stroke="#333" stroke-width="1.1"/></svg>
<svg class="a" style="left:835.6px;top:545.8px" width="3.4" height="5.4" viewBox="0 0 3.4 5.4"><path d="M.4 .4L2.8 2.7L.4 5" fill="none" stroke="#333" stroke-width="1.1"/></svg>
<div class="a" style="left:842px;top:544px;width:9px;height:8.6px;background:#c8c8c8"></div>
<!-- status bar -->
<div class="t sx" style="left:3px;top:558.6px;font-size:7px;color:#111">Wpisz tekst etykiety. Esc, aby zakończyć.</div>
<div class="t sx" style="left:690.4px;top:558.6px;font-size:7px;color:#8a8a8a">Pomiary</div>
<div class="a" style="left:716.4px;top:556px;width:79px;height:10.8px;background:#fff;border:1px solid #adadad"></div>
<div class="a" style="left:798.4px;top:556px;width:51.2px;height:10.8px;background:#fff;border:1px solid #adadad"><div class="t sx" style="left:2px;top:1.8px;font-size:7px;color:#111">113%</div><svg class="a" style="right:2.6px;top:3.2px" width="5" height="3.2" viewBox="0 0 5 3.2"><path d="M.4 .4 L2.5 2.6 L4.6 .4" fill="none" stroke="#444" stroke-width=".8"/></svg></div>

<!--BOTTOM_END-->
<!--CHROME_START-->
<svg class="a" style="left:0;top:0" width="1013" height="58" viewBox="0 0 1013 58">
<!-- app icon -->
<g fill="none" stroke="#d23a2a" stroke-width=".9"><rect x="2.6" y="3.4" width="4.6" height="5.4"/><path d="M4.6 2.2 H9.2 V7.6 H7.2"/><path d="M4 6.2 h1.8 v1.6"/></g>
<!-- window controls -->
<path d="M949.2 6 h5" stroke="#222" stroke-width=".8"/>
<g fill="none" stroke="#222" stroke-width=".8"><rect x="972.8" y="4.4" width="4.2" height="4.2"/><path d="M974.2 4.4 v-1.3 h4.2 v4.2 h-1.4"/></g>
<path d="M997.2 3.2 l5.4 5.4 M1002.6 3.2 l-5.4 5.4" stroke="#222" stroke-width=".8"/>
<!-- toolbar separators -->
<g stroke="#c9c9c9" stroke-width="1"><path d="M2.5 25.5V44.5M28.5 25.5V44.5M170.5 25.5V44.5M195.5 25.5V44.5M294.5 25.5V44.5M385.5 25.5V44.5M411.5 25.5V44.5"/></g>
<path d="M0 45.3H1013" stroke="#fafafa" stroke-width=".8"/><path d="M0 46.2H853" stroke="#c6c6c6" stroke-width=".9"/>
<!-- select arrow -->
<path d="M14 29.8 V38.6 L16 36.8 L17.4 39.8 L18.6 39.2 L17.2 36.3 H19.8 Z" fill="#111"/>
<!-- pencil -->
<path d="M36.6 37 L44.6 28.8 Q45.8 28.2 46.6 29.4 L47 30 L38.6 38.6 Z" fill="#b5382c" stroke="#6e231b" stroke-width=".5"/><path d="M35 40.4 L36.6 37 L38.6 38.6 Z" fill="#9a9a9a" stroke="#555" stroke-width=".4"/>
<path d="M51.6 32.4 h6.8 l-3.4 3.7 z M81.2 32.4 h6.8 l-3.4 3.7 z M109.6 32.4 h6.8 l-3.4 3.7 z M138.6 32.4 h6.8 l-3.4 3.7 z M262.4 32.4 h6.8 l-3.4 3.7 z M481.4 39 h7 l-3.5 3.8 z" fill="#111"/>
<!-- arc -->
<g fill="none" stroke="#5b9bd8" stroke-width=".9"><path d="M64.4 29.6 H75.8"/><path d="M65.2 39.6 Q73.6 38 75.8 29.6"/><path d="M75.8 29.6 L70.4 38.4" stroke-width=".6"/></g>
<!-- rectangle -->
<path d="M94.5 29 L102.7 28.4 L103.5 40.1 L94 38.8 Z" fill="#8e9484" stroke="#747a6c" stroke-width=".5"/><path d="M94.5 29 L103.5 40.1" stroke="#8fc0dc" stroke-width=".7"/>
<!-- circle -->
<circle cx="128.1" cy="34.5" r="6" fill="#8e9484" stroke="#747a6c" stroke-width=".6"/><circle cx="128.1" cy="34.5" r="2.5" fill="none" stroke="#b4d4e4" stroke-width=".7" stroke-dasharray="1.2 .8"/><circle cx="128.1" cy="34.5" r=".7" fill="#cfe4ee"/>
<!-- polygon -->
<path d="M156.6 28.6 L163.4 30.8 L163.2 37.6 L157.4 40.6 L152 36.6 L152.6 30.6 Z" fill="#8e9484" stroke="#747a6c" stroke-width=".6"/><circle cx="157.8" cy="34.4" r="2.5" fill="none" stroke="#b4d4e4" stroke-width=".7" stroke-dasharray="1.2 .8"/>
<!-- offset -->
<g fill="none" stroke="#2f6fb6" stroke-width="1"><path d="M178.4 32.4 Q183 28 188.8 31.4"/><path d="M184.6 40.4 Q190.2 36.6 189 30"/></g><path d="M182.2 36.2 L186.8 30.6 L188 34.4 L184.4 37.4 Z" fill="#2458a0"/><path d="M181 38.6 l2 -2.6" stroke="#111" stroke-width=".8"/>
<!-- text box A -->
<rect x="204.4" y="30.4" width="8.4" height="10.2" fill="#fcfcfc" stroke="#8a8a8a" stroke-width=".6"/>
<text x="208.6" y="39.2" font-family="'Liberation Serif',serif" font-size="8.6" text-anchor="middle" fill="#666">A</text>
<!-- label -->
<rect x="227.6" y="29.6" width="9" height="6.6" fill="#fff" stroke="#666" stroke-width=".7"/><text x="232.1" y="35.2" font-family="'Liberation Sans',sans-serif" font-size="5.6" text-anchor="middle" fill="#333">A1</text><path d="M226.4 33.6 V39.6" stroke="#444" stroke-width=".7"/><circle cx="226.4" cy="39.8" r=".9" fill="#111"/>
<!-- dimension -->
<g fill="none" stroke="#555" stroke-width=".8"><path d="M245.4 33.4 l2.2 -3.2 l3.6 2.6 M249 36 l3.4 -2.4 l3.2 3.6 M246 30 l-1 1.6 M256.4 38.6 l1 -1.2"/></g>
<!-- table -->
<rect x="276.2" y="29.2" width="11.2" height="11.4" fill="#fff" stroke="#222" stroke-width=".8"/><rect x="276.2" y="29.2" width="11.2" height="3" fill="#222"/><path d="M276.2 35H287.4M276.2 37.8H287.4M280 32.2V40.6M283.7 32.2V40.6" stroke="#4a7fc0" stroke-width=".7"/>
<!-- eraser -->
<path d="M304.6 30.4 L311.6 29 Q313.2 29 312.8 30.6 L310.2 38.4 Q309.6 39.8 308 39.8 L303 38.8 Q301.2 38.2 301.8 36.6 Z" fill="#f2a0b4" stroke="#c45f7a" stroke-width=".7"/><path d="M304.6 30.4 L309 32.4 L307 39.4" fill="none" stroke="#c45f7a" stroke-width=".6"/>
<!-- eyedropper -->
<path d="M325 40.2 L326 37.4 L331.2 32.2 L332.8 33.8 L327.6 39 Z" fill="#ddd" stroke="#444" stroke-width=".6"/><path d="M330.6 31.6 L332.6 29.4 Q334 28.4 335 29.6 Q335.8 30.8 334.8 31.8 L332.8 34 Z" fill="#222"/>
<!-- knife -->
<path d="M347 40.2 L348.2 36.6 L355.4 29.4 L357.2 30.4 L351.4 38.8 Z" fill="#555" stroke="#222" stroke-width=".5"/><path d="M347 40.2 L348.2 36.6 L350.6 38.6 Z" fill="#bbb"/>
<!-- style/glue -->
<path d="M370 38.6 L375.8 29.8 Q377.4 28.8 378.8 30.2 Q380 31.6 379 33 L373.4 40.4 Z" fill="#ececec" stroke="#555" stroke-width=".7"/><circle cx="376" cy="33.6" r="1.6" fill="#5a86c4"/><path d="M368.6 40.6 l2.4 -2.2 l1.8 2 z" fill="#c07a3a"/>
<!-- monitor -->
<rect x="394" y="29" width="11.2" height="8" rx=".8" fill="#1f6fd0" stroke="#123c78" stroke-width=".8"/><path d="M399.6 37 v2 M396.2 39.8 h6.8" stroke="#222" stroke-width="1.4"/>
<!-- add page -->
<path d="M418.8 30 H426.6 L429.4 32.6 V39.6 H418.8 Z" fill="#eef4fb" stroke="#9aa4b0" stroke-width=".7"/><path d="M421 34.8 h5.6 M423.8 32 v5.6" stroke="#1f5fb8" stroke-width="1.6"/>
<!-- prev / next page -->
<path d="M441 30 H448.8 L451.6 32.6 V39.6 H441 Z" fill="#dedede" stroke="#a4a4a4" stroke-width=".7"/><path d="M449 34.8 h-5 m2 -2 l-2.2 2 l2.2 2" fill="none" stroke="#8c8c8c" stroke-width="1.4"/>
<path d="M463.2 30 H471 L473.8 32.6 V39.6 H463.2 Z" fill="#dedede" stroke="#a4a4a4" stroke-width=".7"/><path d="M465.6 34.8 h5 m-2 -2 l2.2 2 l-2.2 2" fill="none" stroke="#8c8c8c" stroke-width="1.4"/>
<!-- document tab -->
<path d="M0 57.2 H851" stroke="#b2b2b2" stroke-width="1"/>
<path d="M1 57.6 L9.4 47.9 H82 Q83.4 47.9 83.4 49.2 V57.6 Z" fill="#f8f8f8" stroke="#b4b4b4" stroke-width=".8"/>
<text x="13" y="54.8" font-family="'Liberation Sans',sans-serif" font-size="6.5" font-weight="bold" fill="#111">&lt;bez nazwy&gt; - Page 1</text>
<path d="M833.6 50.8 h4 l-2 2.2 z" fill="#111"/>
<path d="M843.4 49.6 l4 4 M847.4 49.6 l-4 4" stroke="#111" stroke-width="1.1"/>
</svg>

<!--CHROME_END-->
<!-- RIGHT PANEL -->
<!--PANEL_START-->
<div id="panelwrap" class="a" style="left:0;top:0;width:1013px;height:570px;font-size:7px">
<div class="a " style="left:853.6px;top:46.4px;width:159.4px;height:521.8px;background:#f0f0f0;border-left:1.2px solid #b6b6b6;border-top:1px solid #a2a2a2"></div>
<div class="a " style="left:854.4px;top:47.0px;width:158.6px;height:9.2px;background:linear-gradient(#ececec,#d6d6d6);border-bottom:1px solid #9c9c9c"><div class="t" style="left:1.6px;top:1px;font-size:7.6px;color:#111;letter-spacing:-.1px;transform:scaleX(.93);transform-origin:0 50%">Zasobnik domyślny</div><svg class="a" style="left:141px;top:1.6px" width="6" height="7" viewBox="0 0 6 7"><path d="M1.6 .6H4.4V3.4H1.6ZM.6 3.6H5.4M3 3.6V6.4" fill="none" stroke="#111" stroke-width=".9"/><path d="M3.6 .6V3.4" stroke="#111" stroke-width="1.2"/></svg><svg class="a" style="left:149.6px;top:2.2px" width="5.4" height="5.4" viewBox="0 0 5 5"><path d="M.4 .4L4.6 4.6M4.6 .4L.4 4.6" stroke="#111" stroke-width="1.2"/></svg></div>
<div class="a " style="left:897.0px;top:56.4px;width:31.6px;height:4.8px;background:#fff;border:1px solid #b9b9b9;border-top:none"></div>
<div class="a " style="left:968.6px;top:56.4px;width:31.6px;height:4.8px;background:#fff;border:1px solid #b9b9b9;border-top:none"></div>
<div class="a " style="left:880.0px;top:56.7px;width:13.0px;height:1.9px;background:#8a8a8a;opacity:.55;border-radius:1px"></div>
<div class="a " style="left:952.0px;top:56.7px;width:13.0px;height:1.9px;background:#8a8a8a;opacity:.55;border-radius:1px"></div>
<div class="a " style="left:900.0px;top:56.7px;width:4.0px;height:1.9px;background:#777;opacity:.5"></div>
<div class="a " style="left:971.6px;top:56.7px;width:5.0px;height:1.9px;background:#777;opacity:.5"></div>
<div class="a " style="left:1003.0px;top:56.6px;width:8.6px;height:511.0px;background:#f0f0f0"></div>
<div class="a " style="left:1003.4px;top:221.8px;width:7.8px;height:124.6px;background:#cdcdcd"></div>
<svg class="a" style="left:1004.6px;top:59.6px" width="5.4" height="3.4" viewBox="0 0 5.4 3.4"><path d="M.4 3L2.7 .6L5 3" fill="none" stroke="#333" stroke-width="1.05"/></svg>
<svg class="a" style="left:1004.6px;top:562.4px" width="5.4" height="3.4" viewBox="0 0 5.4 3.4"><path d="M.4 .4L2.7 2.8L5 .4" fill="none" stroke="#333" stroke-width="1.05"/></svg>
<div class="a " style="left:854.6px;top:66.2px;width:147.6px;height:10.0px;background:linear-gradient(#ececec,#e0e0e0 35%,#b9b9b9);border-top:1px solid #f8f8f8;border-bottom:1px solid #9c9c9c;"><svg class="a" style="left:3.6px;top:3.1px" width="5" height="3.6" viewBox="0 0 5 3.6"><path d="M0 0H5L2.5 3.6Z" fill="#111"/></svg><div class="t" style="left:11.4px;top:0.0px;font-size:8px;font-weight:bold;letter-spacing:-.1px;color:#1a1a1a;transform:scaleX(.88);transform-origin:0 50%">Model SketchUp</div><div class="a" style="right:2.4px;top:0.1px;width:7.4px;height:6.6px;background:#e4e4e4;border:.6px solid #d4d4d4;border-radius:1px"><svg class="a" style="left:1.1px;top:.7px" width="4.4" height="4.4" viewBox="0 0 4 4"><path d="M.3 .3L3.7 3.7M3.7 .3L.3 3.7" stroke="#111" stroke-width="1"/></svg></div></div>
<div class="a " style="left:857.2px;top:79.0px;width:20.6px;height:10.4px;background:#fbfbfb;border:1px solid #e2e2e2;border-bottom:none"><div class="t sx" style="left:1.8px;top:.3px;color:#111;transform:scaleX(.8)">Widok</div></div>
<div class="a " style="left:877.8px;top:80.4px;width:20.0px;height:9.0px;background:#f0f0f0;border:1px solid #e2e2e2;border-left:none;border-bottom:none"><div class="t sx" style="left:3px;top:0;color:#111">Style</div></div>
<div class="a " style="left:857.2px;top:89.4px;width:143.6px;height:0.8px;background:#e4e4e4"></div>
<div class="t sx " style="left:860.4px;top:94.9px;color:#b4b4b4">Sceny</div>
<div class="a " style="left:908.6px;top:94.2px;width:87.8px;height:9.8px;background:#e6e6e6;border:1px solid #e0e0e0;"><div class="a" style="right:0;top:0;bottom:0;width:9px;background:#f4f4f4"></div><svg class="a" style="right:2.6px;top:50%;margin-top:-1.6px" width="5" height="3.2" viewBox="0 0 5 3.2"><path d="M.4 .4 L2.5 2.6 L4.6 .4" fill="none" stroke="#c0c0c0" stroke-width=".7"/></svg></div>
<div class="t sx " style="left:860.4px;top:109.2px;color:#b4b4b4">Widoki</div>
<div class="a " style="left:908.6px;top:108.2px;width:87.8px;height:9.8px;background:#e6e6e6;border:1px solid #e0e0e0;"><div class="a" style="right:0;top:0;bottom:0;width:9px;background:#f4f4f4"></div><svg class="a" style="right:2.6px;top:50%;margin-top:-1.6px" width="5" height="3.2" viewBox="0 0 5 3.2"><path d="M.4 .4 L2.5 2.6 L4.6 .4" fill="none" stroke="#c0c0c0" stroke-width=".7"/></svg></div>
<div class="a " style="left:858.8px;top:122.2px;width:39.8px;height:11.6px;background:#cfe5f8;border:1px solid #2f86d6;display:flex;justify-content:center;align-items:center;font-size:7px;color:#8fa9c0"><span class="sc" style="white-space:nowrap">Ortogonalny</span></div>
<div class="a " style="left:908.6px;top:122.4px;width:87.8px;height:9.8px;background:#e6e6e6;border:1px solid #e0e0e0;"><div class="a" style="right:0;top:0;bottom:0;width:9px;background:#f4f4f4"></div><svg class="a" style="right:2.6px;top:50%;margin-top:-1.6px" width="5" height="3.2" viewBox="0 0 5 3.2"><path d="M.4 .4 L2.5 2.6 L4.6 .4" fill="none" stroke="#c0c0c0" stroke-width=".7"/></svg></div>
<svg class="a" style="left:908.8px;top:139.6px" width="6.2" height="6.2" viewBox="0 0 7 7" overflow="visible"><rect x=".45" y=".45" width="6.1" height="6.1" fill="#f4f4f4" stroke="#cfcfcf" stroke-width=".9"/><path d="M1.6 3.6L3 5.1L5.5 1.9" fill="none" stroke="#c4c4c4" stroke-width="1"/></svg>
<div class="t sx " style="left:916.6px;top:135.8px;color:#8e8e8e">Zachowaj skalę podczas</div>
<div class="t sx " style="left:916.6px;top:143.2px;color:#8e8e8e">zmiany rozmiaru</div>
<div class="a " style="left:860.0px;top:153.0px;width:138.8px;height:0.9px;background:#b8b8b8"></div>
<div class="a " style="left:859.0px;top:156.8px;width:39.4px;height:11.2px;background:#cccccc;border:1px solid #c6c6c6;display:flex;justify-content:center;align-items:center;font-size:7px;color:#a3a3a3"><span class="sc" style="white-space:nowrap">Cienie</span></div>
<div class="a " style="left:900.2px;top:157.4px;width:41.0px;height:10.2px;background:#fff;border:1px solid #e0e0e0"><div class="t sx" style="left:1.6px;top:1.6px;color:#7c7c7c">01:30 PM</div><svg class="a" style="right:2.4px;top:1.8px" width="3.4" height="5.8" viewBox="0 0 3.4 5.8"><path d="M0 2.2L1.7 .4L3.4 2.2ZM0 3.6L1.7 5.4L3.4 3.6Z" fill="#8a8a8a"/></svg></div>
<div class="a " style="left:946.0px;top:157.4px;width:43.2px;height:10.2px;background:#fff;border:1px solid #e0e0e0"><div class="t sx" style="left:1.6px;top:1.6px;color:#7c7c7c">11/&nbsp;&nbsp;8</div><svg class="a" style="right:2.4px;top:1.8px" width="3.4" height="5.8" viewBox="0 0 3.4 5.8"><path d="M0 2.2L1.7 .4L3.4 2.2ZM0 3.6L1.7 5.4L3.4 3.6Z" fill="#8a8a8a"/></svg></div>
<div class="a " style="left:859.0px;top:172.6px;width:39.4px;height:11.2px;background:#cccccc;border:1px solid #c6c6c6;display:flex;justify-content:center;align-items:center;font-size:7px;color:#a3a3a3"><span class="sc" style="white-space:nowrap">Mgła</span></div>
<div class="a " style="left:900.2px;top:172.2px;width:15.6px;height:11.8px;background:#fbfbfb;border:1px solid #cfcfcf"><div class="a" style="left:1.6px;top:1.6px;right:1.6px;bottom:1.6px;background:#ececec;border:1px solid #b8b8b8"></div></div>
<svg class="a" style="left:918.4px;top:174.8px" width="6.2" height="6.2" viewBox="0 0 7 7" overflow="visible"><rect x=".45" y=".45" width="6.1" height="6.1" fill="#f4f4f4" stroke="#cfcfcf" stroke-width=".9"/><path d="M1.6 3.6L3 5.1L5.5 1.9" fill="none" stroke="#c4c4c4" stroke-width="1"/></svg>
<div class="t sx " style="left:927.0px;top:175.0px;color:#8e8e8e">Użyj koloru tła</div>
<div class="a " style="left:855.0px;top:189.6px;width:147.0px;height:1.0px;background:#fafafa"></div>
<div class="a " style="left:868.4px;top:195.0px;width:39.0px;height:10.8px;background:#cccccc;border:1px solid #c6c6c6;display:flex;justify-content:center;align-items:center;font-size:7px;color:#a3a3a3"><span class="sc" style="white-space:nowrap">Renderowanie</span></div>
<svg class="a" style="left:909.0px;top:196.4px" width="7.2" height="7.2" viewBox="0 0 7 7" overflow="visible"><rect x=".45" y=".45" width="6.1" height="6.1" fill="#fff" stroke="#333" stroke-width=".9"/><path d="M1.6 3.6L3 5.1L5.5 1.9" fill="none" stroke="#111" stroke-width="1"/></svg>
<div class="t sx " style="left:919.2px;top:196.8px;color:#111">Auto</div>
<div class="a " style="left:965.2px;top:195.0px;width:35.8px;height:10.8px;background:#cccccc;border:1px solid #c6c6c6"><div class="t sx" style="left:4px;top:1.6px;color:#a3a3a3">Raster</div><svg class="a" style="right:2.6px;top:2.6px" width="5" height="4.4" viewBox="0 0 5 4.4"><path d="M0 0H5L2.5 4.4Z" fill="#6a6a6a"/></svg></div>
<div class="a " style="left:854.6px;top:212.2px;width:147.6px;height:10.0px;background:linear-gradient(#ececec,#e0e0e0 35%,#b9b9b9);border-top:1px solid #f8f8f8;border-bottom:1px solid #9c9c9c;"><svg class="a" style="left:3.6px;top:3.1px" width="5" height="3.6" viewBox="0 0 5 3.6"><path d="M0 0H5L2.5 3.6Z" fill="#111"/></svg><div class="t" style="left:11.4px;top:0.0px;font-size:8px;font-weight:bold;letter-spacing:-.1px;color:#1a1a1a;transform:scaleX(.88);transform-origin:0 50%">Rysunek w skali</div><div class="a" style="right:2.4px;top:0.1px;width:7.4px;height:6.6px;background:#e4e4e4;border:.6px solid #d4d4d4;border-radius:1px"><svg class="a" style="left:1.1px;top:.7px" width="4.4" height="4.4" viewBox="0 0 4 4"><path d="M.3 .3L3.7 3.7M3.7 .3L.3 3.7" stroke="#111" stroke-width="1"/></svg></div></div>
<div class="a " style="left:859.0px;top:226.4px;width:139.8px;height:11.2px;background:#e3e3e3;border:1px solid #b4b4b4;display:flex;justify-content:center;align-items:center;color:#111"><span class="sc" style="white-space:nowrap">Wykonaj rysunek w skali</span></div>
<div class="t sxr " style="right:120.2px;top:243.4px;color:#111">Skala:</div>
<div class="a " style="left:896.0px;top:241.4px;width:102.8px;height:10.6px;background:#cccccc;border:1px solid #cccccc;"><div class="t sx" style="left:2px;top:50%;margin-top:-3.6px;color:#8c8c8c">Brak</div><svg class="a" style="right:2.6px;top:50%;margin-top:-1.6px" width="5" height="3.2" viewBox="0 0 5 3.2"><path d="M.4 .4 L2.5 2.6 L4.6 .4" fill="none" stroke="#b4b4b4" stroke-width=".7"/></svg></div>
<div class="t sxr " style="right:120.2px;top:257.8px;color:#111">Długość:</div>
<div class="a " style="left:896.0px;top:255.8px;width:49.8px;height:10.6px;background:#cccccc;border:1px solid #cccccc;"><div class="t sx" style="left:2px;top:50%;margin-top:-3.6px;color:#8c8c8c">Dziesiętne</div><svg class="a" style="right:2.6px;top:50%;margin-top:-1.6px" width="5" height="3.2" viewBox="0 0 5 3.2"><path d="M.4 .4 L2.5 2.6 L4.6 .4" fill="none" stroke="#b4b4b4" stroke-width=".7"/></svg></div>
<div class="a " style="left:946.6px;top:255.8px;width:52.2px;height:10.6px;background:#cccccc;border:1px solid #cccccc;"><div class="t sx" style="left:2px;top:50%;margin-top:-3.6px;color:#8c8c8c">Milimetry</div><svg class="a" style="right:2.6px;top:50%;margin-top:-1.6px" width="5" height="3.2" viewBox="0 0 5 3.2"><path d="M.4 .4 L2.5 2.6 L4.6 .4" fill="none" stroke="#b4b4b4" stroke-width=".7"/></svg></div>
<div class="a " style="left:854.6px;top:272.4px;width:147.6px;height:10.0px;background:linear-gradient(#ececec,#e0e0e0 35%,#b9b9b9);border-top:1px solid #f8f8f8;border-bottom:1px solid #9c9c9c;"><svg class="a" style="left:3.6px;top:3.1px" width="5" height="3.6" viewBox="0 0 5 3.6"><path d="M0 0H5L2.5 3.6Z" fill="#111"/></svg><div class="t" style="left:11.4px;top:0.0px;font-size:8px;font-weight:bold;letter-spacing:-.1px;color:#1a1a1a;transform:scaleX(.88);transform-origin:0 50%">Styl wymiaru</div><div class="a" style="right:2.4px;top:0.1px;width:7.4px;height:6.6px;background:#e4e4e4;border:.6px solid #d4d4d4;border-radius:1px"><svg class="a" style="left:1.1px;top:.7px" width="4.4" height="4.4" viewBox="0 0 4 4"><path d="M.3 .3L3.7 3.7M3.7 .3L.3 3.7" stroke="#111" stroke-width="1"/></svg></div></div>
<div class="a " style="left:859.0px;top:288.2px;width:12.2px;height:10.8px;background:#d6e8f8;border:1px solid #3a8ad8;"><svg class="a" style="left:50%;top:50%;margin-left:-4.5px;margin-top:-4.5px" width="9" height="9" viewBox="0 0 9 9"><path d="M1.4 1V8M7.6 1V8M1.4 6.4H7.6M3 2H6M4.5 2V5" fill="none" stroke="#6a92bc" stroke-width=".8"/></svg></div>
<div class="a " style="left:871.6px;top:288.2px;width:12.2px;height:10.8px;background:#cdcdcd;border:1px solid #c8c8c8;"><svg class="a" style="left:50%;top:50%;margin-left:-4.5px;margin-top:-4.5px" width="9" height="9" viewBox="0 0 9 9"><path d="M2 2V7M7 2V7M2 4.5H3.4M5.6 4.5H7M4.5 3V6" fill="none" stroke="#a2abb4" stroke-width=".8"/></svg></div>
<div class="a " style="left:883.8px;top:288.2px;width:12.2px;height:10.8px;background:#cdcdcd;border:1px solid #c8c8c8;"><svg class="a" style="left:50%;top:50%;margin-left:-4.5px;margin-top:-4.5px" width="9" height="9" viewBox="0 0 9 9"><path d="M1.6 2.6V8M7.4 2.6V8M1.6 2.6H7.4M3.4 4.4H5.6M4.5 4.4V7" fill="none" stroke="#a2abb4" stroke-width=".8"/></svg></div>
<div class="a " style="left:902.4px;top:288.2px;width:12.2px;height:10.8px;background:#cdcdcd;border:1px solid #c8c8c8;"><svg class="a" style="left:50%;top:50%;margin-left:-4.5px;margin-top:-4.5px" width="9" height="9" viewBox="0 0 9 9"><path d="M2 3L4 2L5 4L7 5.4M5 4L4.4 6.8M6 4.2L7 7" fill="none" stroke="#a2abb4" stroke-width=".8"/></svg></div>
<div class="a " style="left:914.8px;top:288.2px;width:12.2px;height:10.8px;background:#cdcdcd;border:1px solid #c8c8c8;"><svg class="a" style="left:50%;top:50%;margin-left:-4.5px;margin-top:-4.5px" width="9" height="9" viewBox="0 0 9 9"><path d="M2 3L4 2L5 4L7 5.4M5 4L4.4 6.8M6 4.2L7 7" fill="none" stroke="#a2abb4" stroke-width=".8"/></svg></div>
<div class="a " style="left:927.2px;top:288.2px;width:12.2px;height:10.8px;background:#d6e8f8;border:1px solid #3a8ad8;"><svg class="a" style="left:50%;top:50%;margin-left:-4.5px;margin-top:-4.5px" width="9" height="9" viewBox="0 0 9 9"><path d="M2 3L4 2L5 4L7 5.4M5 4L4.4 6.8M6 4.2L7 7" fill="none" stroke="#6a92bc" stroke-width=".8"/></svg></div>
<div class="a " style="left:939.6px;top:288.2px;width:12.2px;height:10.8px;background:#cdcdcd;border:1px solid #c8c8c8;"><svg class="a" style="left:50%;top:50%;margin-left:-4.5px;margin-top:-4.5px" width="9" height="9" viewBox="0 0 9 9"><path d="M2 3L4 2L5 4L7 5.4M5 4L4.4 6.8M6 4.2L7 7" fill="none" stroke="#a2abb4" stroke-width=".8"/></svg></div>
<div class="a " style="left:966.6px;top:288.2px;width:13.2px;height:10.8px;background:#cdcdcd;border:1px solid #c8c8c8;"><svg class="a" style="left:50%;top:50%;margin-left:-4.5px;margin-top:-4.5px" width="9" height="9" viewBox="0 0 9 9"><path d="M1.4 8V3H7.6V8M3 3V1.6M6 3V1.6M3 5H6" fill="none" stroke="#a2abb4" stroke-width=".8"/></svg></div>
<div class="a " style="left:985.0px;top:288.2px;width:13.4px;height:10.8px;background:#cdcdcd;border:1px solid #c8c8c8;"><svg class="a" style="left:50%;top:50%;margin-left:-4.5px;margin-top:-4.5px" width="9" height="9" viewBox="0 0 9 9"><path d="M1.4 8V3.4H7.6V8M2.4 3.4V1.6H5M6.6 3.4V2M3 5.4H6" fill="none" stroke="#a2abb4" stroke-width=".8"/></svg></div>
<div class="t sxr " style="right:99.4px;top:305.4px;color:#a6a6a6">Styl linii odniesienia:</div>
<div class="a " style="left:917.4px;top:303.4px;width:81.4px;height:10.6px;background:#cccccc;border:1px solid #cccccc;"><div class="t sx" style="left:2px;top:50%;margin-top:-3.6px;color:#555">Brak etykiety</div><svg class="a" style="right:2.6px;top:50%;margin-top:-1.6px" width="5" height="3.2" viewBox="0 0 5 3.2"><path d="M.4 .4 L2.5 2.6 L4.6 .4" fill="none" stroke="#b4b4b4" stroke-width=".7"/></svg></div>
<div class="a " style="left:860.0px;top:317.2px;width:139.0px;height:0.9px;background:#6f8ea0"></div>
<div class="a " style="left:860.2px;top:321.2px;width:55.8px;height:11.4px;background:#cfe5f8;border:1px solid #2f86d6;display:flex;justify-content:center;align-items:center;font-size:7px;color:#8fa9c0"><span class="sc" style="white-space:nowrap">Autoskala</span></div>
<div class="a " style="left:917.4px;top:321.6px;width:81.4px;height:10.6px;background:#cccccc;border:1px solid #cccccc;"><div class="t sx" style="left:2px;top:50%;margin-top:-3.6px;color:#555">Rozmiar rzeczywisty (1:1)</div><svg class="a" style="right:2.6px;top:50%;margin-top:-1.6px" width="5" height="3.2" viewBox="0 0 5 3.2"><path d="M.4 .4 L2.5 2.6 L4.6 .4" fill="none" stroke="#b4b4b4" stroke-width=".7"/></svg></div>
<div class="t sxr " style="right:120.2px;top:337.6px;color:#a6a6a6">Długość:</div>
<div class="a " style="left:896.0px;top:335.6px;width:49.8px;height:10.4px;background:#cccccc;border:1px solid #cccccc;"><div class="t sx" style="left:2px;top:50%;margin-top:-3.6px;color:#555">Dziesiętne</div><svg class="a" style="right:2.6px;top:50%;margin-top:-1.6px" width="5" height="3.2" viewBox="0 0 5 3.2"><path d="M.4 .4 L2.5 2.6 L4.6 .4" fill="none" stroke="#b4b4b4" stroke-width=".7"/></svg></div>
<div class="a " style="left:946.6px;top:335.6px;width:52.2px;height:10.4px;background:#cccccc;border:1px solid #cccccc;"><div class="t sx" style="left:2px;top:50%;margin-top:-3.6px;color:#555">Metry</div><svg class="a" style="right:2.6px;top:50%;margin-top:-1.6px" width="5" height="3.2" viewBox="0 0 5 3.2"><path d="M.4 .4 L2.5 2.6 L4.6 .4" fill="none" stroke="#b4b4b4" stroke-width=".7"/></svg></div>
<div class="t sxr " style="right:68.0px;top:351.8px;color:#a6a6a6">Precyzja:</div>
<div class="a " style="left:947.8px;top:349.6px;width:51.0px;height:10.8px;background:#cccccc;border:1px solid #cccccc;"><div class="t sx" style="left:2px;top:50%;margin-top:-3.6px;color:#555">0,01 m</div><svg class="a" style="right:2.6px;top:50%;margin-top:-1.6px" width="5" height="3.2" viewBox="0 0 5 3.2"><path d="M.4 .4 L2.5 2.6 L4.6 .4" fill="none" stroke="#b4b4b4" stroke-width=".7"/></svg></div>
<div class="t sxr " style="right:119.6px;top:366.0px;color:#a6a6a6">Kąt:</div>
<div class="a " style="left:896.0px;top:363.8px;width:49.8px;height:10.8px;background:#cccccc;border:1px solid #cccccc;"><svg class="a" style="right:2.6px;top:50%;margin-top:-1.6px" width="5" height="3.2" viewBox="0 0 5 3.2"><path d="M.4 .4 L2.5 2.6 L4.6 .4" fill="none" stroke="#b4b4b4" stroke-width=".7"/></svg></div>
<div class="a " style="left:946.6px;top:363.8px;width:52.2px;height:10.8px;background:#cccccc;border:1px solid #cccccc;"><svg class="a" style="right:2.6px;top:50%;margin-top:-1.6px" width="5" height="3.2" viewBox="0 0 5 3.2"><path d="M.4 .4 L2.5 2.6 L4.6 .4" fill="none" stroke="#b4b4b4" stroke-width=".7"/></svg></div>
<div class="a " style="left:854.6px;top:378.6px;width:147.6px;height:10.0px;background:linear-gradient(#ececec,#e0e0e0 35%,#b9b9b9);border-top:1px solid #f8f8f8;border-bottom:1px solid #9c9c9c;"><svg class="a" style="left:3.6px;top:3.1px" width="5" height="3.6" viewBox="0 0 5 3.6"><path d="M0 0H5L2.5 3.6Z" fill="#111"/></svg><div class="t" style="left:11.4px;top:0.0px;font-size:8px;font-weight:bold;letter-spacing:-.1px;color:#1a1a1a;transform:scaleX(.88);transform-origin:0 50%">Styl tekstu</div><div class="a" style="right:2.4px;top:0.1px;width:7.4px;height:6.6px;background:#e4e4e4;border:.6px solid #d4d4d4;border-radius:1px"><svg class="a" style="left:1.1px;top:.7px" width="4.4" height="4.4" viewBox="0 0 4 4"><path d="M.3 .3L3.7 3.7M3.7 .3L.3 3.7" stroke="#111" stroke-width="1"/></svg></div></div>
<div class="a " style="left:855.0px;top:388.8px;width:147.2px;height:11.0px;background:#f0f0f0"></div>
<div class="a " style="left:858.0px;top:389.6px;width:21.2px;height:10.4px;background:#fff;border:1px solid #e2e2e2;border-bottom:none"><div class="t sx" style="left:1px;top:.1px;color:#111;transform:scaleX(.73)">Format</div></div>
<div class="a " style="left:879.2px;top:391.0px;width:20.6px;height:9.0px;background:#f0f0f0;border:1px solid #e2e2e2;border-left:none;border-bottom:none"><div class="t sx" style="left:3.2px;top:0;color:#111;transform:scaleX(.76)">Lista</div></div>
<div class="a " style="left:858.0px;top:400.0px;width:143.0px;height:0.8px;background:#e4e4e4"></div>
<div class="a " style="left:859.0px;top:403.4px;width:9.6px;height:10.6px;background:#e9e9e9;border:1px solid #dcdcdc;font-family:'Liberation Serif',serif;font-size:10.5px;font-weight:bold;color:#222;text-align:center;line-height:9px;text-decoration:underline">T</div>
<div class="a " style="left:869.2px;top:403.4px;width:10.6px;height:10.6px;background:#e9e9e9;border:1px solid #dcdcdc;font-family:'Liberation Serif',serif;font-size:10.5px;font-weight:bold;color:#222;text-align:center;line-height:9px"><span style="text-decoration:line-through">T</span></div>
<div class="a " style="left:883.0px;top:403.2px;width:20.6px;height:11.0px;background:#fff;border:1px solid #dcdcdc"><div class="t" style="left:3.2px;top:.2px;font-family:'Liberation Serif',serif;font-size:10.5px;color:#222">T</div><div class="a" style="left:11px;top:1.2px;width:6.4px;height:7px;background:#000"></div></div>
<div class="a " style="left:905.8px;top:403.4px;width:10.8px;height:10.6px;background:#cdcdcd;border:1px solid #c8c8c8;"><svg class="a" style="left:.4px;top:0" width="9" height="9" viewBox="0 0 9 9"><path d="M1.5 2H7.5M1.5 3.6H5.5M1.5 5.2H7.5M1.5 6.8H5.5" fill="none" stroke="#4a4a4a" stroke-width="1"/></svg></div>
<div class="a " style="left:917.4px;top:403.4px;width:10.8px;height:10.6px;background:#d6e8f8;border:1px solid #3a8ad8;"><svg class="a" style="left:.4px;top:0" width="9" height="9" viewBox="0 0 9 9"><path d="M1.5 2H7.5M2.5 3.6H6.5M1.5 5.2H7.5M2.5 6.8H6.5" fill="none" stroke="#4a4a4a" stroke-width="1"/></svg></div>
<div class="a " style="left:929.0px;top:403.4px;width:10.8px;height:10.6px;background:#cdcdcd;border:1px solid #c8c8c8;"><svg class="a" style="left:.4px;top:0" width="9" height="9" viewBox="0 0 9 9"><path d="M1.5 2H7.5M3.5 3.6H7.5M1.5 5.2H7.5M3.5 6.8H7.5" fill="none" stroke="#4a4a4a" stroke-width="1"/></svg></div>
<div class="a " style="left:941.8px;top:403.4px;width:10.6px;height:10.6px;background:#cdcdcd;border:1px solid #c8c8c8;"><svg class="a" style="left:.4px;top:0" width="9" height="9" viewBox="0 0 9 9"><path d="M1.5 1.6H7.5M4.5 2.6V7.6M3 2.6H6V4H3Z" fill="none" stroke="#9a9a9a" stroke-width="1"/></svg></div>
<div class="a " style="left:953.2px;top:403.4px;width:10.6px;height:10.6px;background:#d6e8f8;border:1px solid #3a8ad8;"><svg class="a" style="left:.4px;top:0" width="9" height="9" viewBox="0 0 9 9"><path d="M4.5 1.4V7.6M3 3.4H6V5.4H3ZM1.6 4.5H2.6" fill="none" stroke="#8aa0b4" stroke-width="1"/></svg></div>
<div class="a " style="left:965.0px;top:403.4px;width:10.6px;height:10.6px;background:#cdcdcd;border:1px solid #c8c8c8;"><svg class="a" style="left:.4px;top:0" width="9" height="9" viewBox="0 0 9 9"><path d="M1.5 7.4H7.5M4.5 1.6V6.4M3 5L4.5 6.6L6 5" fill="none" stroke="#9a9a9a" stroke-width="1"/></svg></div>
<div class="a " style="left:977.2px;top:403.4px;width:10.6px;height:10.6px;background:#cdcdcd;border:1px solid #c8c8c8;"><svg class="a" style="left:.4px;top:0" width="9" height="9" viewBox="0 0 9 9"><path d="M2 1.6H7M2 3.2H7M2 4.8H7M2 6.4H7M2 8H7" fill="none" stroke="#9a9a9a" stroke-width="1"/></svg></div>
<div class="a " style="left:989.0px;top:403.4px;width:10.6px;height:10.6px;background:#d6e8f8;border:1px solid #3a8ad8;"><svg class="a" style="left:.4px;top:0" width="9" height="9" viewBox="0 0 9 9"><path d="M2 1.6H7M2 3.2H7M2 4.8H7M2 6.4H7M2 8H7" fill="none" stroke="#8aa0b4" stroke-width="1"/></svg></div>
<div class="t sx " style="left:859.0px;top:417.8px;color:#111">Czcionka</div>
<div class="t sx " style="left:922.4px;top:417.8px;color:#111">Styl czcionki</div>
<div class="t sx " style="left:966.2px;top:417.8px;color:#111">Rozmiar</div>
<div class="a " style="left:858.2px;top:426.8px;width:59.0px;height:10.4px;background:#fff;border:1px solid #74b0c6;"><div class="t sx" style="left:2px;top:1.6px;color:#222">Georgia</div></div>
<div class="a " style="left:920.6px;top:426.8px;width:40.8px;height:10.4px;background:#fff;border:1px solid #74b0c6;"><div class="t sx" style="left:2px;top:1.6px;color:#222">Normalny</div></div>
<div class="a " style="left:965.8px;top:426.8px;width:31.6px;height:10.4px;background:#fff;border:1px solid #74b0c6;"><div class="t sx" style="left:2px;top:1.6px;color:#222">10 pkt</div></div>
<div class="a " style="left:858.2px;top:438.4px;width:59.0px;height:123.0px;background:#fff;border:1px solid #a8b4bc;overflow:hidden;"><div class="a" style="left:0;top:0;width:48.6px;height:7.6px;background:#0a78d7"></div><div class="t" style="left:.6px;top:.2px;font-family:'Liberation Serif',serif;font-size:7.8px;color:#fff;letter-spacing:.25px">Georgia</div><div class="t" style="left:.6px;top:8.2px;font-family:'DejaVu Serif',serif;font-size:6.3px;color:#333;letter-spacing:-.25px">GeoSlab703 Md</div><div class="t" style="left:.6px;top:17.2px;font-family:'DejaVu Serif',serif;font-size:4.6px;color:#333;letter-spacing:-.3px;transform:scaleY(1.3);transform-origin:0 0">GeoSlab703 MdCn BT</div><div class="t" style="left:.6px;top:25.4px;font-family:'DejaVu Sans',sans-serif;font-weight:bold;font-size:6px;color:#111;letter-spacing:-.2px;transform:scaleY(.8);transform-origin:0 0">LEGSON RM</div><div class="t" style="left:.6px;top:33.6px;font-family:'Liberation Serif',serif;font-style:italic;font-weight:bold;font-size:6px;color:#222;letter-spacing:-.3px">Gallyg-Sol</div><div class="t" style="left:.6px;top:42.4px;font-weight:bold;font-size:6.9px;color:#111;letter-spacing:-.1px">Glockenspiel</div><div class="t" style="left:.6px;top:50px;font-family:'DejaVu Sans',sans-serif;font-size:6.9px;color:#222;letter-spacing:.1px;transform:scaleX(1.08);transform-origin:0 0">GOOD TIMES</div><div class="t" style="left:.6px;top:60px;font-weight:bold;font-size:4.6px;color:#222;letter-spacing:-.2px">Gmdlng</div><div class="t" style="left:1.6px;top:68.4px;font-family:'Liberation Serif',serif;font-size:6.4px;color:#8a8a8a;letter-spacing:.3px">Golbic&#926;</div><div class="t" style="left:1.6px;top:77.6px;font-family:'Liberation Serif',serif;font-size:6.4px;color:#9a9a9a;letter-spacing:.3px">Gothic&#920;</div><div class="t" style="left:1.6px;top:87px;font-family:'Liberation Serif',serif;font-size:6.4px;color:#9a9a9a;letter-spacing:.5px">Golhic I</div><div class="t" style="left:.6px;top:95.8px;font-family:'DejaVu Sans',sans-serif;font-weight:bold;font-size:6.6px;color:#111;letter-spacing:-.2px">GREEK DINER IN</div><div class="t" style="left:1.6px;top:105px;font-family:'Liberation Serif',serif;font-size:6.8px;color:#b4b4b4;letter-spacing:.4px">&#915;&#961;&#949;&#949;&#954;X</div><div class="t" style="left:1.6px;top:114.4px;font-family:'Liberation Serif',serif;font-size:6.8px;color:#d2d2d2;letter-spacing:.4px">&#915;&#961;&#949;&#949;&#954;&#931;</div><div class="a" style="left:49.4px;top:0;width:8px;height:122px;background:#f0f0f0"></div><div class="a" style="left:49.8px;top:37px;width:7.4px;height:9px;background:#cdcdcd"></div><svg class="a" style="left:50.8px;top:3px" width="5.4" height="3.4" viewBox="0 0 5.4 3.4"><path d="M.4 3L2.7 .6L5 3" fill="none" stroke="#333" stroke-width="1.05"/></svg><svg class="a" style="left:50.8px;top:115.4px" width="5.4" height="3.4" viewBox="0 0 5.4 3.4"><path d="M.4 .4L2.7 2.8L5 .4" fill="none" stroke="#333" stroke-width="1.05"/></svg></div>
<div class="a " style="left:920.6px;top:438.4px;width:40.8px;height:123.0px;background:#fff;border:1px solid #a8b4bc;overflow:hidden;"><div class="a" style="left:0;top:0;width:39px;height:7.6px;background:#0a78d7"></div><div class="t" style="left:.4px;top:.2px;font-family:'Liberation Serif',serif;font-size:7.9px;color:#fff;letter-spacing:.15px">Normalny</div><div class="t" style="left:.4px;top:8.4px;font-family:'Liberation Serif',serif;font-size:7.7px;font-weight:bold;color:#222;letter-spacing:0">Pogrubiony</div><div class="t" style="left:.4px;top:16.2px;font-family:'Liberation Serif',serif;font-size:7.7px;font-weight:bold;font-style:italic;color:#222;letter-spacing:.1px">Pogrubiona</div><div class="t" style="left:.4px;top:24.2px;font-family:'Liberation Serif',serif;font-size:8px;font-style:italic;color:#555;letter-spacing:.3px">Kursywa</div><div class="t" style="left:.4px;top:32px;font-family:'Liberation Serif',serif;font-size:7.9px;color:#444;letter-spacing:.15px">Normalny</div></div>
<div class="a " style="left:965.8px;top:438.4px;width:31.6px;height:123.0px;background:#fff;border:1px solid #a8b4bc;overflow:hidden;"><div class="a" style="left:0;top:0;width:21.4px;height:7.4px;background:#0a78d7"></div><div class="t sx" style="left:1.4px;top:0.40px;color:#fff;letter-spacing:-.15px">10 pkt</div><div class="t sx" style="left:1.4px;top:7.27px;color:#222;letter-spacing:-.15px">11 pkt</div><div class="t sx" style="left:1.4px;top:14.14px;color:#222;letter-spacing:-.15px">12 pkt</div><div class="t sx" style="left:1.4px;top:21.01px;color:#222;letter-spacing:-.15px">14 pkt</div><div class="t sx" style="left:1.4px;top:27.88px;color:#222;letter-spacing:-.15px">16 pkt</div><div class="t sx" style="left:1.4px;top:34.75px;color:#222;letter-spacing:-.15px">18 pkt</div><div class="t sx" style="left:1.4px;top:41.62px;color:#222;letter-spacing:-.15px">20 pkt</div><div class="t sx" style="left:1.4px;top:48.49px;color:#222;letter-spacing:-.15px">22 pkt</div><div class="t sx" style="left:1.4px;top:55.36px;color:#222;letter-spacing:-.15px">24 pkt</div><div class="t sx" style="left:1.4px;top:62.23px;color:#222;letter-spacing:-.15px">26 pkt</div><div class="t sx" style="left:1.4px;top:69.10px;color:#222;letter-spacing:-.15px">28 pkt</div><div class="t sx" style="left:1.4px;top:75.97px;color:#222;letter-spacing:-.15px">36 pkt</div><div class="t sx" style="left:1.4px;top:82.84px;color:#222;letter-spacing:-.15px">48 pkt</div><div class="t sx" style="left:1.4px;top:89.71px;color:#222;letter-spacing:-.15px">72 pkt</div><div class="t sx" style="left:1.4px;top:96.58px;color:#222;letter-spacing:-.15px">96 pkt</div><div class="t sx" style="left:1.4px;top:103.45px;color:#222;letter-spacing:-.15px">144 pkt</div><div class="t sx" style="left:1.4px;top:110.32px;color:#222;letter-spacing:-.15px">288 pkt</div><div class="a" style="left:22.2px;top:0;width:8px;height:122px;background:#f0f0f0"></div><div class="a" style="left:22.6px;top:20px;width:7.4px;height:93px;background:#cdcdcd"></div><svg class="a" style="left:23.6px;top:3px" width="5.4" height="3.4" viewBox="0 0 5.4 3.4"><path d="M.4 3L2.7 .6L5 3" fill="none" stroke="#333" stroke-width="1.05"/></svg><svg class="a" style="left:23.6px;top:115.4px" width="5.4" height="3.4" viewBox="0 0 5.4 3.4"><path d="M.4 .4L2.7 2.8L5 .4" fill="none" stroke="#333" stroke-width="1.05"/></svg></div>
</div>
<!--PANEL_END-->
<div id="bottomedge" class="a"></div>
</body>
</html>
